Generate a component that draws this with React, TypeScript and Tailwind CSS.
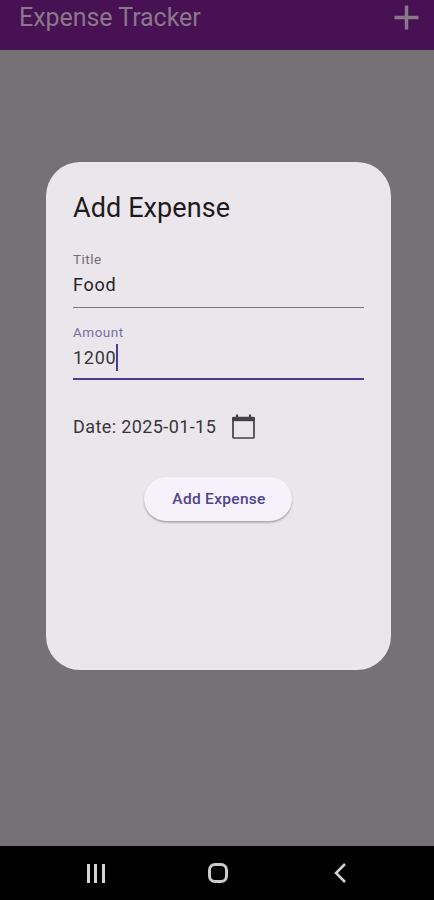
import { useState } from 'react';
import { MdAdd } from 'react-icons/md';

const CalendarIcon = () => (
  <svg width="24" height="27" viewBox="0 0 24 27" fill="none" stroke="currentColor">
    <rect x="2" y="4.5" width="21" height="20.5" rx="1" strokeWidth="1.7" />
    <path d="M1.2 4h22.6v4.2H1.2z" fill="currentColor" stroke="none" />
    <path d="M6 1.5v4M19 1.5v4" strokeWidth="2.1" />
  </svg>
);

const NavigationBar = () => (
  <nav className="flex h-[54px] items-center justify-between bg-black pr-[86px] pl-[83px] text-[#d4d4d4]">
    <button aria-label="Recents" className="flex h-[19px] w-[25px] items-center justify-center gap-[4.5px]">
      <span className="h-full w-[3px] bg-current" />
      <span className="h-full w-[3px] bg-current" />
      <span className="h-full w-[3px] bg-current" />
    </button>
    <button aria-label="Home" className="mr-[2px] h-[20px] w-[20px] rounded-[7px] border-[3px] border-[#cbcbcb]" />
    <button aria-label="Back">
      <svg width="18" height="22" viewBox="0 0 18 22" fill="none" stroke="currentColor" strokeWidth="2.5">
        <path d="M15 2 L6 11 L15 20" />
      </svg>
    </button>
  </nav>
);

export default function App() {
  const [title] = useState('Food');
  const [amount] = useState('1200');
  const [date] = useState('2025-01-15');

  return (
    <div className="flex h-[900px] w-[434px] flex-col overflow-hidden bg-[#767174] font-['Roboto',sans-serif]">
      <header className="flex h-[50px] items-start justify-between bg-[#471153] pr-[7px] pl-[19px] text-[#89788a]">
        <h1 className="mt-[3px] text-[25px] leading-[30px] tracking-[-0.05px]">Expense Tracker</h1>
        <button aria-label="Add" className="-mt-[3px]">
          <MdAdd size={41} />
        </button>
      </header>

      <main className="flex-1 px-[46px] pt-[112px]">
        <section className="h-[507.5px] w-[345px] rounded-[34px] bg-[#ebe6eb] px-[27px] pt-[28px] text-[#1d1a20]">
          <h2 className="text-[27px] leading-[36px] tracking-[0.1px]">Add Expense</h2>

          <div className="mt-[25px] border-b border-[#7c7780] pb-[10px] text-[#252229]">
            <p className="text-[13.5px] leading-[17px] tracking-[0.5px] text-[#716c76]">Title</p>
            <p className="mt-[5px] text-[18px] leading-[24px] tracking-[0.7px]">{title}</p>
          </div>

          <div className="mt-[16px] border-b-2 border-[#4b3c93] pb-[7px] text-[#38353c]">
            <p className="text-[13.5px] leading-[17px] tracking-[0.5px] text-[#796da5]">Amount</p>
            <div className="mt-[3px] flex h-[27px] items-center">
              <span className="text-[18px] leading-[24px] tracking-[0.7px]">{amount}</span>
              <span className="h-[27px] w-[2px] bg-[#4b3c93]" />
            </div>
          </div>

          <div className="mt-[33px] flex h-[27px] items-center">
            <span className="w-[158px] text-[18px] leading-[25px] tracking-[0.4px] text-[#38353c]">Date: {date}</span>
            <button aria-label="Select date" className="text-[#453f49]">
              <CalendarIcon />
            </button>
          </div>

          <div className="mt-[37px] flex justify-center pr-px">
            <button className="h-[44px] w-[148px] rounded-full bg-[#f6f1fb] pt-[2px] pl-[2px] text-[15.5px] font-medium tracking-[0.3px] text-[#51458a] shadow-[0_1.5px_2px_rgba(0,0,0,0.3)]">
              Add Expense
            </button>
          </div>
        </section>
      </main>

      <NavigationBar />
    </div>
  );
}
